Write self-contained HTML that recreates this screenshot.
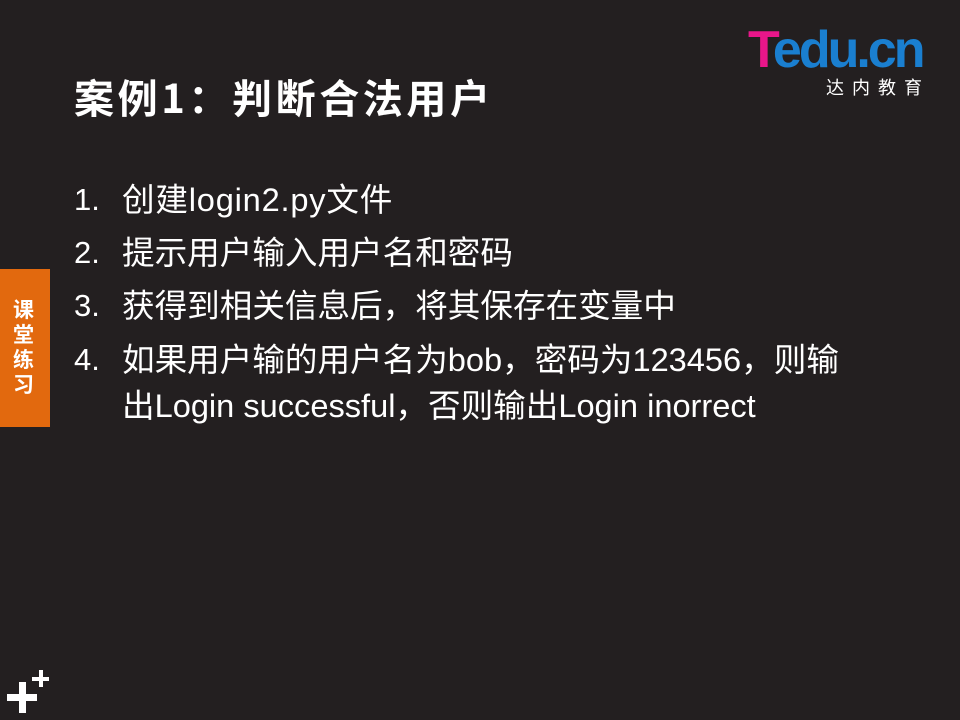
<!DOCTYPE html>
<html><head><meta charset="utf-8"><style>
body{margin:0;width:960px;height:720px;background:#231f20;position:relative;overflow:hidden;font-family:"Liberation Sans","Noto Sans CJK SC",sans-serif;color:#fff}
.t{position:absolute;left:74px;top:68px;font-size:40px;letter-spacing:3.6px;font-weight:bold;white-space:nowrap;font-family:"Noto Sans CJK SC",sans-serif;line-height:56px}
.l{position:absolute;font-size:32.6px;white-space:nowrap;line-height:40px}
.n{position:absolute;left:74px;font-size:31px}
.tab{position:absolute;left:0;top:269px;width:50px;height:158px;background:#e2690e}
.tab div{position:absolute;left:13px;top:28px;width:24px;font-size:21px;font-weight:bold;line-height:25px;font-family:"Noto Sans CJK SC",sans-serif}
.p{position:absolute;background:#fff}
</style></head><body>
<div class="t">案例1：判断合法用户</div>
<div class="l" style="top:180px"><span class="n">1.</span><span style="position:absolute;left:122px;letter-spacing:0.8px">创建login2.py文件</span></div>
<div class="l" style="top:233px"><span class="n">2.</span><span style="position:absolute;left:122px">提示用户输入用户名和密码</span></div>
<div class="l" style="top:286px"><span class="n">3.</span><span style="position:absolute;left:122px">获得到相关信息后，将其保存在变量中</span></div>
<div class="l" style="top:340px"><span class="n">4.</span><span style="position:absolute;left:122px">如果用户输的用户名为bob，密码为123456，则输</span></div>
<div class="l" style="top:386px"><span style="position:absolute;left:122px">出Login successful，否则输出Login inorrect</span></div>
<div class="tab"><div>课堂练习</div></div>
<div class="p" style="left:7px;top:694px;width:30px;height:7px"></div>
<div class="p" style="left:19px;top:682px;width:7px;height:31px"></div>
<div class="p" style="left:32px;top:677px;width:17px;height:4px"></div>
<div class="p" style="left:39px;top:670px;width:4px;height:17px"></div>
<div style="position:absolute;left:748px;top:22px;font-size:52px;font-weight:bold;letter-spacing:-3px;line-height:56px"><span style="color:#e8168a">T</span><span style="color:#1a7fd0">edu.cn</span></div>
<div style="position:absolute;left:826px;top:74px;font-size:18px;letter-spacing:8px;font-family:'Noto Sans CJK SC',sans-serif">达内教育</div>
</body></html>
